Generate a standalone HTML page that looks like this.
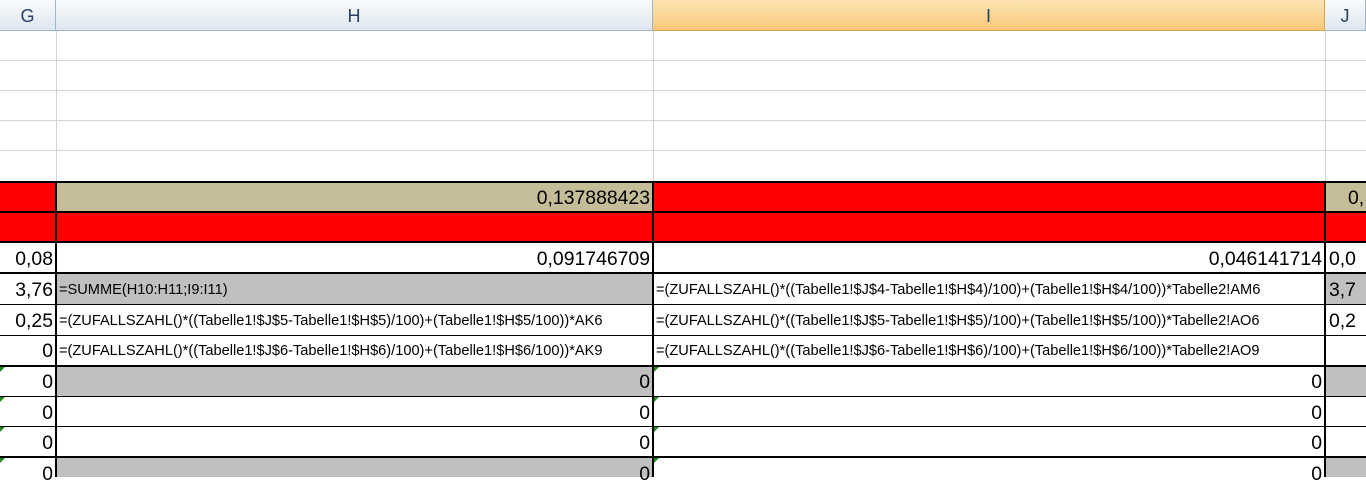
<!DOCTYPE html>
<html><head><style>
body{margin:0;width:1366px;height:477px;overflow:hidden;background:#fff;position:relative;font-family:"Liberation Sans",sans-serif;}
.a{position:absolute;box-sizing:border-box;}
.hd{top:0;height:31px;background:linear-gradient(#f9fbfd,#dfe6ef);border-right:1px solid #9eb6ce;border-bottom:1px solid #9eb6ce;font-size:18px;color:#27415f;text-align:center;line-height:33px;}
.hl{position:absolute;left:0;width:1366px;height:1px;background:#d4d4d4;}
.vl{position:absolute;top:31px;width:1px;height:151px;background:#d4d4d4;}
.n{font-size:19.4px;text-align:right;padding-right:3px;line-height:32px;white-space:nowrap;overflow:hidden;}
.f{font-size:14.6px;padding-left:2px;line-height:32px;white-space:nowrap;overflow:hidden;}
.bk{position:absolute;background:#000;}
.tri{position:absolute;width:0;height:0;border-top:5px solid #1e8a1e;border-right:5px solid transparent;}
</style></head><body>
<div class="a hd" style="left:0;width:56px;">G</div>
<div class="a hd" style="left:56px;width:597px;">H</div>
<div class="a hd" style="left:653px;width:672px;background:linear-gradient(#fce4b0,#f7c87a);border-color:#d9a54b;">I</div>
<div class="a hd" style="left:1325px;width:41px;">J</div>
<div class="hl" style="top:60px"></div><div class="hl" style="top:90px"></div><div class="hl" style="top:120px"></div><div class="hl" style="top:150px"></div>
<div class="vl" style="left:56px"></div><div class="vl" style="left:653px"></div><div class="vl" style="left:1325px"></div>
<div class="a" style="left:0;top:182px;width:1366px;height:60px;background:#f00"></div>
<div class="a n" style="left:57px;top:182px;width:596px;height:30px;background:#c4bd97">0,137888423</div>
<div class="a n" style="left:1326px;top:182px;width:40px;height:30px;background:#c4bd97;text-align:left;padding-left:22px">0,</div>
<div class="a n" style="left:0;top:243px;width:56px;height:30px">0,08</div>
<div class="a n" style="left:57px;top:243px;width:596px;height:30px">0,091746709</div>
<div class="a n" style="left:654px;top:243px;width:671px;height:30px">0,046141714</div>
<div class="a n" style="left:1326px;top:243px;width:40px;height:30px;text-align:left;padding-left:3px">0,0</div>
<div class="a" style="left:57px;top:274px;width:596px;height:30px;background:#c0c0c0"></div>
<div class="a" style="left:1326px;top:274px;width:40px;height:30px;background:#c0c0c0"></div>
<div class="a" style="left:57px;top:366px;width:596px;height:30px;background:#c0c0c0"></div>
<div class="a" style="left:1326px;top:366px;width:40px;height:30px;background:#c0c0c0"></div>
<div class="a" style="left:57px;top:457px;width:596px;height:20px;background:#c0c0c0"></div>
<div class="a" style="left:1326px;top:457px;width:40px;height:20px;background:#c0c0c0"></div>
<div class="a n" style="left:0;top:274px;width:56px;height:31px">3,76</div>
<div class="a f" style="left:57px;top:274px;width:596px;height:31px">=SUMME(H10:H11;I9:I11)</div>
<div class="a f" style="left:654px;top:274px;width:671px;height:31px">=(ZUFALLSZAHL()*((Tabelle1!$J$4-Tabelle1!$H$4)/100)+(Tabelle1!$H$4/100))*Tabelle2!AM6</div>
<div class="a n" style="left:1326px;top:274px;width:40px;height:31px;text-align:left;padding-left:3px">3,7</div>
<div class="a n" style="left:0;top:305px;width:56px;height:31px">0,25</div>
<div class="a f" style="left:57px;top:305px;width:596px;height:31px">=(ZUFALLSZAHL()*((Tabelle1!$J$5-Tabelle1!$H$5)/100)+(Tabelle1!$H$5/100))*AK6</div>
<div class="a f" style="left:654px;top:305px;width:671px;height:31px">=(ZUFALLSZAHL()*((Tabelle1!$J$5-Tabelle1!$H$5)/100)+(Tabelle1!$H$5/100))*Tabelle2!AO6</div>
<div class="a n" style="left:1326px;top:305px;width:40px;height:31px;text-align:left;padding-left:3px">0,2</div>
<div class="a n" style="left:0;top:335px;width:56px;height:31px">0</div>
<div class="a f" style="left:57px;top:335px;width:596px;height:31px">=(ZUFALLSZAHL()*((Tabelle1!$J$6-Tabelle1!$H$6)/100)+(Tabelle1!$H$6/100))*AK9</div>
<div class="a f" style="left:654px;top:335px;width:671px;height:31px">=(ZUFALLSZAHL()*((Tabelle1!$J$6-Tabelle1!$H$6)/100)+(Tabelle1!$H$6/100))*Tabelle2!AO9</div>
<div class="a n" style="left:0;top:366px;width:56px;height:30px">0</div>
<div class="a n" style="left:57px;top:366px;width:596px;height:30px">0</div>
<div class="a n" style="left:654px;top:366px;width:671px;height:30px">0</div>
<div class="a n" style="left:0;top:397px;width:56px;height:30px">0</div>
<div class="a n" style="left:57px;top:397px;width:596px;height:30px">0</div>
<div class="a n" style="left:654px;top:397px;width:671px;height:30px">0</div>
<div class="a n" style="left:0;top:427px;width:56px;height:30px">0</div>
<div class="a n" style="left:57px;top:427px;width:596px;height:30px">0</div>
<div class="a n" style="left:654px;top:427px;width:671px;height:30px">0</div>
<div class="a n" style="left:0;top:458px;width:56px;height:30px">0</div>
<div class="a n" style="left:57px;top:458px;width:596px;height:30px">0</div>
<div class="a n" style="left:654px;top:458px;width:671px;height:30px">0</div>
<div class="bk" style="left:0;top:181px;width:1366px;height:2px"></div>
<div class="bk" style="left:0;top:211px;width:1366px;height:2px"></div>
<div class="bk" style="left:0;top:241px;width:1366px;height:2px"></div>
<div class="bk" style="left:0;top:272px;width:1366px;height:2px"></div>
<div class="bk" style="left:0;top:304px;width:1366px;height:1px"></div>
<div class="bk" style="left:0;top:335px;width:1366px;height:1px"></div>
<div class="bk" style="left:0;top:365px;width:1366px;height:2px"></div>
<div class="bk" style="left:0;top:396px;width:1366px;height:1px"></div>
<div class="bk" style="left:0;top:426px;width:1366px;height:1px"></div>
<div class="bk" style="left:0;top:456px;width:1366px;height:2px"></div>
<div class="bk" style="left:55px;top:181px;width:2px;height:296px"></div>
<div class="bk" style="left:652px;top:181px;width:2px;height:296px"></div>
<div class="bk" style="left:1324px;top:181px;width:2px;height:296px"></div>
<div class="tri" style="left:0;top:367px"></div><div class="tri" style="left:0;top:397px"></div><div class="tri" style="left:0;top:427px"></div><div class="tri" style="left:0;top:458px"></div>
<div class="tri" style="left:654px;top:367px"></div><div class="tri" style="left:654px;top:397px"></div><div class="tri" style="left:654px;top:427px"></div><div class="tri" style="left:654px;top:458px"></div>
</body></html>
